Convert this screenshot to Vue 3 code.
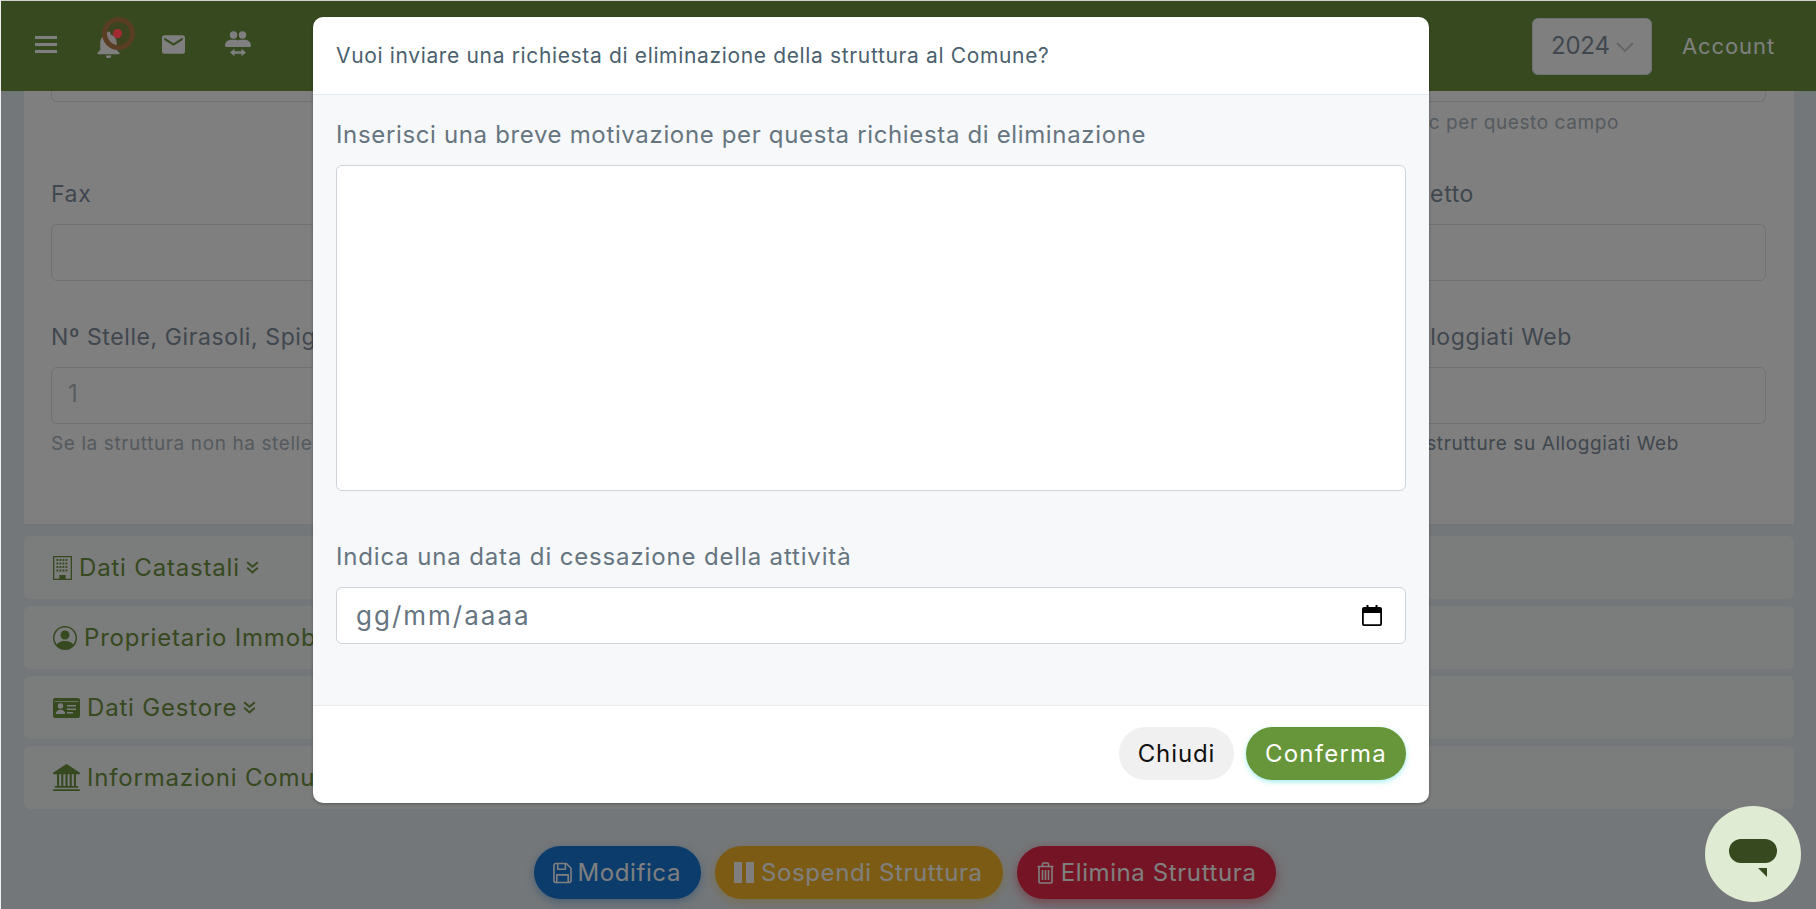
<script setup>
const sections = [
  { id: 'building', label: 'Dati Catastali', chevron: true },
  { id: 'person', label: 'Proprietario Immobile', chevron: false },
  { id: 'card', label: 'Dati Gestore', chevron: true },
  { id: 'bank', label: 'Informazioni Comune', chevron: false },
]
</script>

<template>
  <div class="page">
    <header class="topbar">
      <div class="tools">
        <svg class="ico-menu" viewBox="0 0 22 17" fill="#fff"><rect width="22" height="3" y="0" /><rect width="22" height="3" y="7" /><rect width="22" height="3" y="14" /></svg>
        <span class="bell-wrap">
          <svg class="ico-bell" viewBox="0 0 24 24" fill="#fff"><path d="M12 22c1.1 0 2-.9 2-2h-4c0 1.1.9 2 2 2zm6-6v-5c0-3.07-1.63-5.64-4.5-6.32V4c0-.83-.67-1.5-1.5-1.5s-1.5.67-1.5 1.5v.68C7.64 5.36 6 7.92 6 11v5l-2 2v1h16v-1l-2-2z" /></svg>
          <span class="pulse"></span>
        </span>
        <svg class="ico-mail" viewBox="2 4 20 16" fill="#fff"><path d="M20 4H4c-1.1 0-2 .9-2 2v12c0 1.1.9 2 2 2h16c1.1 0 2-.9 2-2V6c0-1.1-.9-2-2-2zm0 4l-8 5-8-5V6l8 5 8-5v2z" /></svg>
        <svg class="ico-users" viewBox="0 0 26 26" fill="#fff">
          <circle cx="8.5" cy="4" r="3.7" /><circle cx="17.5" cy="4" r="3.7" />
          <path d="M0 14.5c0-3.6 3-5.800 6-5.800h4.500c1 0 2 .4 2.500 1 .5-.6 1.500-1 2.500-1H20c3 0 6 2.200 6 5.800 0 1-1 1.500-2 1.500H2c-1 0-2-.5-2-1.500z" />
          <path d="M5 21.500l4.500-3.700v2.500h7v-2.500l4.500 3.700-4.500 3.800v-2.600h-7v2.600z" />
        </svg>
      </div>
      <div class="account-area">
        <div class="year">2024
          <svg class="year-chev" viewBox="0 0 18 10" fill="none" stroke="#c4cad0" stroke-width="1.800"><path d="M1 1l8 8 8-8" /></svg>
        </div>
        <span class="account">Account</span>
      </div>
    </header>

    <main class="content">
      <section class="card">
        <div class="grid">
          <div class="field">
            <div class="stub"></div>
          </div>
          <div class="field">
            <div class="stub"></div>
            <p class="help muted right r-pec">Inserisci la pec per questo campo</p>
          </div>
        </div>
        <div class="grid row-fax">
          <div class="field">
            <label class="label">Fax</label>
            <div class="input"></div>
          </div>
          <div class="field">
            <label class="label right r-prog">Progetto</label>
            <div class="input"></div>
          </div>
        </div>
        <div class="grid row-stars">
          <div class="field">
            <label class="label">Nº Stelle, Girasoli, Spighe</label>
            <div class="input disabled">1</div>
            <p class="help muted">Se la struttura non ha stelle</p>
          </div>
          <div class="field">
            <label class="label right r-web">Alloggiati Web</label>
            <div class="input"></div>
            <p class="help strong right r-help">strutture su Alloggiati Web</p>
          </div>
        </div>
      </section>

      <div class="accordion">
        <div v-for="s in sections" :key="s.id" class="acc-item">
          <svg v-if="s.id === 'building'" class="acc-ico ico-building" viewBox="0 0 19 24">
            <path fill="#6c923e" fill-rule="evenodd" d="M0 0h19v24H0zM1.300 1.300v21.400h5v-3.700h6.400v3.700h5V1.300z" />
            <path fill="none" stroke="#6c923e" stroke-width="1.800" stroke-dasharray="1.800 1.200" d="M3.500 4h12M3.500 7.500h12M3.500 11h12M3.500 14.500h12" />
          </svg>
          <svg v-else-if="s.id === 'person'" class="acc-ico ico-person" viewBox="0 0 16 16" fill="#6c923e">
            <path d="M11 6a3 3 0 1 1-6 0 3 3 0 0 1 6 0z" />
            <path fill-rule="evenodd" d="M0 8a8 8 0 1 1 16 0A8 8 0 0 1 0 8zm8-7a7 7 0 0 0-5.468 11.370C3.242 11.226 4.805 10 8 10s4.757 1.225 5.468 2.370A7 7 0 0 0 8 1z" />
          </svg>
          <svg v-else-if="s.id === 'card'" class="acc-ico ico-card" viewBox="0 0 27 20">
            <path fill="#6c923e" fill-rule="evenodd" d="M2 0h23a2 2 0 0 1 2 2v16a2 2 0 0 1-2 2H2a2 2 0 0 1-2-2V2a2 2 0 0 1 2-2zM1.500 3v.8h24V3zM14 7v1.500h9V7zm0 3.500V12h9v-1.500zm0 3.500v1.500h6V14z" />
            <circle cx="7.500" cy="8" r="2.700" fill="#f7f8f9" />
            <path fill="#f7f8f9" d="M2.800 16c0-2.600 2-4.200 4.700-4.200s4.700 1.600 4.700 4.200z" />
          </svg>
          <svg v-else class="acc-ico ico-bank" viewBox="0 0 16 16" fill="#6c923e">
            <path d="M8.277.084a.5.5 0 0 0-.554 0l-7.500 5A.5.5 0 0 0 .5 6h1.875v7H1.500a.5.5 0 0 0 0 1h13a.5.5 0 1 0 0-1h-.875V6H15.500a.5.5 0 0 0 .277-.916l-7.500-5zM12.375 6v7h-1.250V6h1.250zm-2.500 0v7h-1.250V6h1.250zm-2.500 0v7h-1.250V6h1.250zm-2.500 0v7h-1.250V6h1.250zM.5 15a.5.5 0 0 0 0 1h15a.5.5 0 1 0 0-1H.5z" />
          </svg>
          <span class="acc-text">{{ s.label }}</span>
          <svg v-if="s.chevron" class="acc-chev" viewBox="0 0 13 13" fill="none" stroke="#6c923e" stroke-width="1.900"><path d="M1.200 1.200l5.300 4.600 5.300-4.600M1.200 6.800l5.300 4.600 5.300-4.600" /></svg>
        </div>
      </div>

      <div class="actions">
        <button class="pill blue">
          <svg class="btn-ico" viewBox="0 0 20 22" fill="none" stroke="#fff" stroke-width="1.700"><path d="M1 3v16a2 2 0 0 0 2 2h14a2 2 0 0 0 2-2V6l-5-5H3a2 2 0 0 0-2 2zM5 1v6h8V1M4 21v-8h12v8" /></svg>
          Modifica
        </button>
        <button class="pill amber">
          <svg class="btn-ico pause" viewBox="0 0 21 21" fill="#fff"><rect width="8" height="21" /><rect x="12" width="8" height="21" /></svg>
          Sospendi Struttura
        </button>
        <button class="pill red">
          <svg class="btn-ico" viewBox="0 0 18 22" fill="none" stroke="#fff" stroke-width="1.600"><path d="M1 4.500h16M6 4.500V2a1 1 0 0 1 1-1h4a1 1 0 0 1 1 1v2.500M2.500 4.500V20a1 1 0 0 0 1 1h11a1 1 0 0 0 1-1V4.500M6 8v10M9 8v10M12 8v10" /></svg>
          Elimina Struttura
        </button>
      </div>
    </main>

    <div class="backdrop"></div>
    <span class="notif-dot"></span>

    <div class="modal">
      <div class="modal-head">Vuoi inviare una richiesta di eliminazione della struttura al Comune?</div>
      <div class="modal-body">
        <label class="m-label">Inserisci una breve motivazione per questa richiesta di eliminazione</label>
        <div class="textarea"></div>
        <label class="m-label second">Indica una data di cessazione della attività</label>
        <div class="date">
          <span class="date-text">gg/mm/aaaa</span>
          <svg class="cal" viewBox="0 0 20 21"><path fill="#000" fill-rule="evenodd" d="M2 2h2.500V0h2v2h7V0h2v2H18a2 2 0 0 1 2 2v15a2 2 0 0 1-2 2H2a2 2 0 0 1-2-2V4a2 2 0 0 1 2-2zm-.200 6v11.200h16.400V8z" /></svg>
        </div>
      </div>
      <div class="modal-foot">
        <button class="foot-btn close">Chiudi</button>
        <button class="foot-btn ok">Conferma</button>
      </div>
    </div>

    <div class="chat">
      <span class="chat-pill"></span>
      <svg class="chat-tail" viewBox="0 0 9 9" fill="#36491f"><path d="M0 0h9v9z" /></svg>
    </div>
  </div>
</template>

<style scoped>
.page {
  position: relative;
  box-sizing: border-box;
  height: 909px;
  overflow: hidden;
  background: #e8eef2;
  border-top: 1px solid #d0d0d0;
  border-left: 1px solid #f0f0f0;
  font-family: Inter, "Noto Sans", sans-serif;
}
.topbar {
  height: 90px;
  background: #6c923e;
  display: flex;
  align-items: center;
  justify-content: space-between;
  padding-left: 34px;
  padding-right: 41px;
}
.tools { display: flex; align-items: center; }
.ico-menu { width: 22px; height: 17px; margin-top: -4px; }
.bell-wrap { position: relative; width: 28px; height: 28px; margin-left: 37px; margin-top: -4px; }
.ico-bell { width: 33px; height: 33px; display: block; margin: -2.5px 0 0 -2.5px; }
.pulse {
  position: absolute; left: 8px; top: -13px; width: 33px; height: 33px; box-sizing: border-box;
  border-radius: 50%; border: 5px solid #b47c48; background: rgba(220, 53, 69, .1);
}
.notif-dot { position: absolute; left: 112px; top: 28px; width: 9px; height: 9px; border-radius: 50%; background: #a32a32; }
.ico-mail { width: 23px; height: 19px; margin-left: 40px; margin-top: -4px; }
.ico-users { width: 26px; height: 26px; margin-left: 40px; margin-top: -4px; }
.account-area { display: flex; align-items: center; margin-top: 1px; }
.year {
  box-sizing: border-box; width: 120px; height: 57px; background: #fff; border: 1px solid #dee2e6; border-radius: 6px;
  display: flex; align-items: center; padding: 0 0 2px 18px; gap: 6px; color: #808e9e; font-size: 24px; letter-spacing: -.2px;
}
.year-chev { width: 18px; height: 10px; margin-top: 3px; }
.account { color: #fff; font-size: 22px; font-weight: 400; margin: 0 0 2px 30px; letter-spacing: .9px; }

.content { padding: 0 22px 0 23px; }
.card { background: #fff; height: 433px; padding: 0 28px 0 27px; box-sizing: border-box; }
.grid { display: grid; grid-template-columns: 1fr 1fr; column-gap: 24px; }
.field { min-width: 0; white-space: nowrap; overflow: hidden; }
.stub {
  height: 11px; border: 1px solid #dee2e6; border-top: 0; border-radius: 0 0 6px 6px; box-sizing: border-box;
}
.help { margin: 0; font-size: 19px; line-height: 28px; letter-spacing: .6px; }
.muted { color: #aab4be; }
.strong { color: #808e9e; }
.right { text-align: right; }
.r-pec { padding-right: 147px; margin-top: 7px; }
.r-prog { padding-right: 292px; }
.r-web { padding-right: 194px; letter-spacing: .9px; }
.r-help { padding-right: 87px; }
.label { display: block; color: #808e9e; font-size: 23px; line-height: 32px; height: 32px; letter-spacing: .6px; }
.row-fax { margin-top: 41px; }
.row-stars { margin-top: 40px; }
.input {
  box-sizing: border-box; height: 57px; margin-top: 14px; border: 1px solid #dee2e6; border-radius: 6px;
  background: #fff; padding-left: 16px; line-height: 52px; font-size: 24px; color: #b4bcc4;
}
.row-stars .help { margin-top: 6px; }
.accordion { display: flex; flex-direction: column; gap: 7px; margin-top: 12px; }
.acc-item {
  height: 63px; background: #f7f8f9; border-radius: 6px; padding-left: 29px; display: flex; align-items: center; gap: 7px;
  color: #6c923e; font-size: 24px; letter-spacing: .82px;
}
.acc-ico { flex: none; }
.ico-building { width: 19px; height: 24px; }
.ico-person { width: 24px; height: 24px; }
.ico-card { width: 27px; height: 20px; }
.ico-bank { width: 27px; height: 27px; }
.acc-chev { width: 13px; height: 13px; margin-left: -1px; }
.actions { display: flex; justify-content: center; gap: 14px; margin-top: 37px; margin-right: 8px; }
.pill {
  height: 53px; border: 0; border-radius: 27px; color: #fff; font: inherit; font-size: 24px; padding: 0 20px 0 19px;
  display: inline-flex; align-items: center; gap: 6px; letter-spacing: .6px;
}
.blue { background: #1878d8; box-shadow: 0 3px 8px rgba(24, 120, 216, .4); }
.amber { background: #f8b828; box-shadow: 0 3px 8px rgba(248, 184, 40, .4); }
.red { background: #e82848; box-shadow: 0 4px 12px rgba(232, 40, 72, .5); }
.btn-ico { width: 19px; height: 22px; }
.pause { width: 21px; height: 21px; }

.backdrop { position: absolute; inset: 0; background: rgba(0, 0, 0, .5); }

.modal {
  position: absolute; left: 312px; top: 16px; width: 1116px; height: 786px; border-radius: 10px; overflow: hidden;
  background: #fff; display: flex; flex-direction: column; box-shadow: 0 1px 3px rgba(0, 0, 0, .3);
}
.modal-head {
  height: 78px; box-sizing: border-box; border-bottom: 1px solid #e3e9f0; padding: 0 23px; line-height: 78px;
  color: #4b5f6e; font-size: 21px; letter-spacing: .65px;
}
.modal-body { flex: 1; background: #f6f8fa; padding: 0 23px; display: flex; flex-direction: column; }
.m-label { display: block; color: #66757f; font-size: 24px; line-height: 36px; margin-top: 22px; letter-spacing: .65px; }
.m-label.second { margin-top: 48px; letter-spacing: .85px; }
.textarea { height: 326px; margin-top: 12px; background: #fff; border: 1px solid #ced4da; border-radius: 6px; box-sizing: border-box; }
.date {
  height: 57px; box-sizing: border-box; margin-top: 12px; background: #fff; border: 1px solid #ced4da; border-radius: 6px;
  padding: 0 23px 0 19px; display: flex; align-items: center; justify-content: space-between; color: #66757f; font-size: 26px;
}
.date-text { letter-spacing: 2px; }
.cal { width: 20px; height: 21px; }
.modal-foot {
  height: 98px; box-sizing: border-box; border-top: 1px solid #e9ecef; padding: 0 23px 2px 0; display: flex; align-items: center;
  justify-content: flex-end; gap: 12px;
}
.foot-btn { height: 53px; border: 0; border-radius: 27px; font: inherit; font-size: 24px; padding: 0; }
.close { width: 115px; background: #f0f0f0; color: #111; letter-spacing: .9px; }
.ok { width: 160px; background: #669639; color: #fff; box-shadow: 0 2px 5px rgba(80, 220, 220, .5); letter-spacing: 1.25px; }

.chat { position: absolute; left: 1704px; top: 805px; width: 96px; height: 96px; border-radius: 50%; background: #dfecd3; }
.chat-pill { position: absolute; left: 24px; top: 33px; width: 48px; height: 24px; border-radius: 12px; background: #36491f; }
.chat-tail { position: absolute; left: 53px; top: 62px; width: 9px; height: 9px; }
</style>

<style>
html, body { margin: 0; padding: 0; overflow: hidden; }
</style>
